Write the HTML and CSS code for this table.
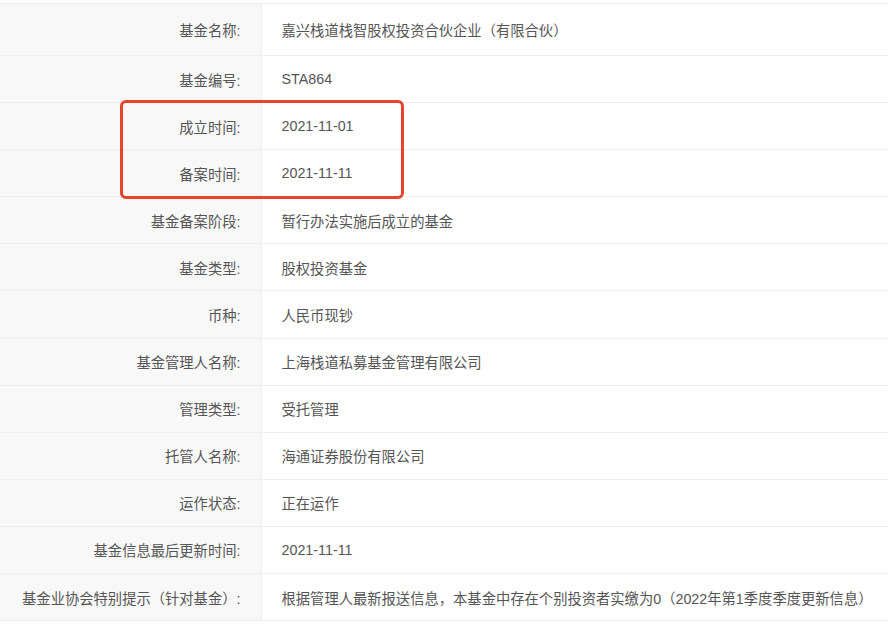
FILE: index.html
```html
<!DOCTYPE html>
<html lang="zh-CN">
<head>
  <meta charset="UTF-8" />
  <title>基金信息</title>
  <meta name="viewport" content="width=device-width, initial-scale=1.0" />
  <link rel="stylesheet" href="styles.css">
</head>
<body>
  <div class="page">
    <table class="fund-table">
      <colgroup>
        <col class="label-col">
        <col>
      </colgroup>
      <tr class="first"><td class="label">基金名称:</td><td class="value">嘉兴栈道栈智股权投资合伙企业（有限合伙）</td></tr>
      <tr><td class="label">基金编号:</td><td class="value">STA864</td></tr>
      <tr><td class="label">成立时间:</td><td class="value">2021-11-01</td></tr>
      <tr><td class="label">备案时间:</td><td class="value">2021-11-11</td></tr>
      <tr><td class="label">基金备案阶段:</td><td class="value">暂行办法实施后成立的基金</td></tr>
      <tr><td class="label">基金类型:</td><td class="value">股权投资基金</td></tr>
      <tr><td class="label">币种:</td><td class="value">人民币现钞</td></tr>
      <tr><td class="label">基金管理人名称:</td><td class="value">上海栈道私募基金管理有限公司</td></tr>
      <tr><td class="label">管理类型:</td><td class="value">受托管理</td></tr>
      <tr><td class="label">托管人名称:</td><td class="value">海通证券股份有限公司</td></tr>
      <tr><td class="label">运作状态:</td><td class="value">正在运作</td></tr>
      <tr><td class="label">基金信息最后更新时间:</td><td class="value">2021-11-11</td></tr>
      <tr><td class="label">基金业协会特别提示（针对基金）:</td><td class="value">根据管理人最新报送信息，本基金中存在个别投资者实缴为0（2022年第1季度季度更新信息）</td></tr>
    </table>

    <!-- highlight round the two date rows -->
    <div class="highlight"></div>
  </div>
</body>
</html>
```

FILE: styles.css
```css
body {
  margin: 0;
  background: #ffffff;
  font-family: "Liberation Sans", "Noto Sans CJK SC", sans-serif;
  color: #555;
}

.page {
  position: relative;
  padding-top: 3px;
}

.fund-table {
  width: 100%;
  table-layout: fixed;
  border-collapse: collapse;
  font-size: 14.3px;
}

.label-col {
  width: 261px;
}

.fund-table td {
  height: 46.1px;
  padding: 0 20px;
  border-top: 1px solid #eeeeee;
  border-bottom: 1px solid #eeeeee;
  white-space: nowrap;
}

.fund-table tr.first td {
  height: 51px;
}

.fund-table td.label {
  padding-left: 8px;
  text-align: right;
  background: #f8f8f8;
  color: #555;
  border-right: 1px solid #eeeeee;
}

.value {
  text-align: left;
  color: #555;
}

.highlight {
  position: absolute;
  left: 120px;
  top: 100px;
  width: 278px;
  height: 93px;
  border: 3px solid #e8432d;
  border-radius: 6px;
}
```
